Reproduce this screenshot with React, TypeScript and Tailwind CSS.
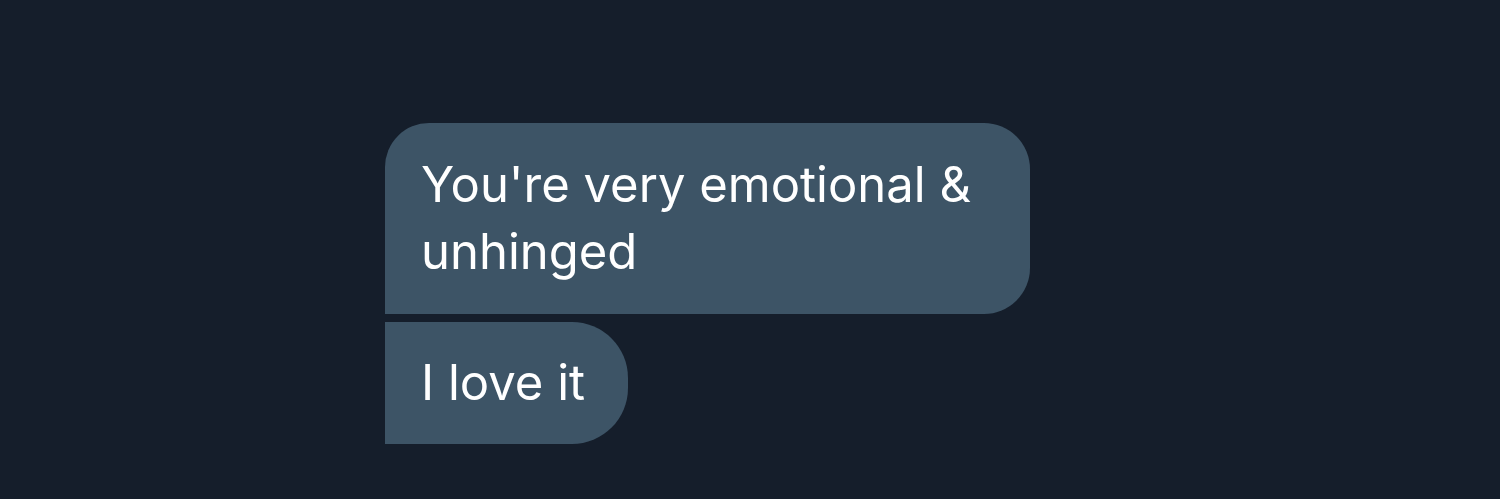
export default function App() {
  return (
    <div className="w-[1500px] h-[499px] bg-[#151e2b] overflow-hidden pl-[385px] pt-[123px]" style={{ fontFamily: "Inter, 'Noto Sans', sans-serif" }}>
      <div className="flex flex-col items-start gap-[8px]">
        <div className="w-[645px] bg-[#3d5466] text-white text-[49px] leading-[67px] pl-[36px] pr-[40px] pt-[28px] pb-[29px] rounded-tl-[44px] rounded-tr-[46px] rounded-br-[46px]">
          You're very emotional &amp; unhinged
        </div>
        <div className="w-[243px] bg-[#3d5466] text-white text-[49px] leading-[67px] pl-[36px] pt-[27px] pb-[28px] rounded-tr-[56px] rounded-br-[56px]">
          I love it
        </div>
      </div>
    </div>
  )
}
